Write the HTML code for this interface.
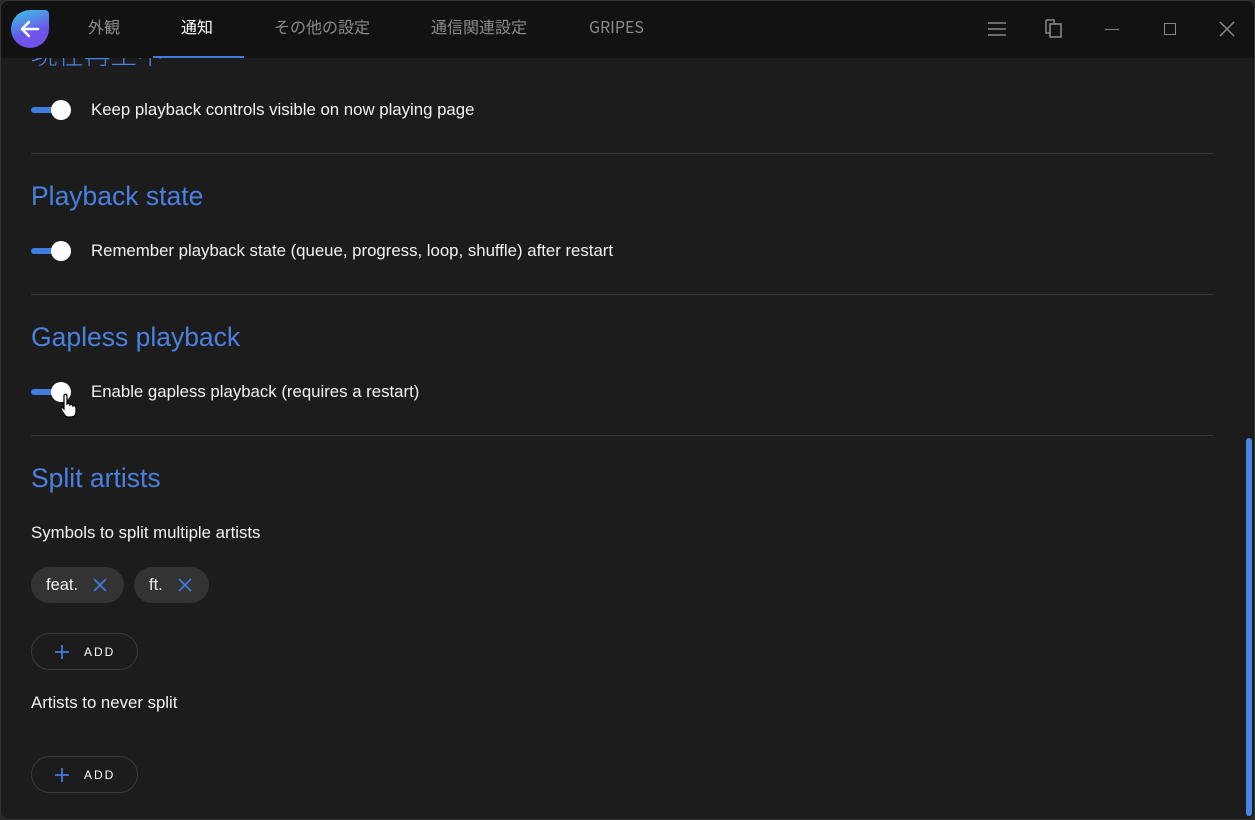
<!DOCTYPE html>
<html><head><meta charset="utf-8"><style>
*{margin:0;padding:0;box-sizing:border-box}
body{width:1255px;height:820px;background:#2a2a2a;overflow:hidden;font-family:"Liberation Sans","Noto Sans CJK JP",sans-serif;position:relative}
.win{position:absolute;left:0;top:0;width:1255px;height:820px;background:#1c1c1c;border-radius:8px;overflow:hidden;border:1px solid #333}
.hdr{position:absolute;left:0;top:0;width:100%;height:57px;background:#121212;z-index:2}
.logo{position:absolute;left:10px;top:9px;width:38px;height:38px;border-radius:19px 4px 19px 19px;background:linear-gradient(160deg,#38c9e8,#6a55e8 60%,#7b4fe6)}
.tab{position:absolute;top:16px;font-size:16px;line-height:18px;color:#8a8a8a;font-family:"Noto Sans CJK JP","Liberation Sans",sans-serif}
.ul{position:absolute;left:152px;top:55px;width:91px;height:2px;background:#3f7de0}
.abs{position:absolute}
h2{position:absolute;left:30px;font-size:26.5px;line-height:32px;font-weight:normal;color:#4a80e0}
.t{position:absolute;left:90px;font-size:16.8px;line-height:20px;color:#f2f2f2}
.tg{position:absolute;left:30px;width:40px;height:20px}
.tg:before{content:"";position:absolute;left:0;top:7px;width:30px;height:6px;border-radius:3px;background:#3f7de0}
.tg:after{content:"";position:absolute;left:20px;top:0;width:20px;height:20px;border-radius:50%;background:#fff}
.hr{position:absolute;left:30px;width:1182px;height:1px;background:#393939}
.chip{position:absolute;top:566px;height:36px;border-radius:18px;background:#333;color:#f0f0f0;font-size:16.5px;line-height:36px;padding-left:15px}
.add{position:absolute;left:30px;width:107px;height:37px;border:1px solid #3a3a3a;border-radius:19px;color:#fff;font-size:12px;letter-spacing:2px}
</style></head><body>
<div class="win">
<div class="hdr">
<div class="logo"><svg width="38" height="38" viewBox="0 0 38 38"><path d="M27 19H12M18 12l-7 7 7 7" stroke="#fff" stroke-width="2.5" fill="none" stroke-linecap="round" stroke-linejoin="round"/></svg></div>
<div class="tab" style="left:87px">外観</div>
<div class="tab" style="left:180px;color:#fff">通知</div>
<div class="tab" style="left:273px">その他の設定</div>
<div class="tab" style="left:430px">通信関連設定</div>
<div class="tab" style="left:588px">GRIPES</div>
<svg class="abs" style="left:985px;top:19px" width="22" height="18"><path d="M2 3h18M2 9h18M2 15h18" stroke="#888" stroke-width="1.5"/></svg>
<svg class="abs" style="left:1043px;top:17px" width="22" height="22"><path d="M2 2h8v3M2 2v13h4" stroke="#888" stroke-width="1.5" fill="none"/><rect x="6" y="6" width="11" height="13" stroke="#888" stroke-width="1.6" fill="none"/></svg>
<div class="abs" style="left:1104px;top:28px;width:14px;height:1px;background:#888"></div>
<div class="abs" style="left:1163px;top:22px;width:12px;height:12px;border:1.5px solid #888"></div>
<svg class="abs" style="left:1218px;top:20px" width="16" height="16"><path d="M1 1l14 14M15 1L1 15" stroke="#888" stroke-width="1.5"/></svg>
<div class="ul"></div>
</div>
<h2 style="top:36px;font-family:'Noto Sans CJK JP',sans-serif;font-weight:300">現在再生中</h2>
<div class="tg" style="top:99px"></div><div class="t" style="top:99px">Keep playback controls visible on now playing page</div>
<div class="hr" style="top:152px"></div>
<h2 style="top:179px">Playback state</h2>
<div class="tg" style="top:240px"></div><div class="t" style="top:240px">Remember playback state (queue, progress, loop, shuffle) after restart</div>
<div class="hr" style="top:293px"></div>
<h2 style="top:320px">Gapless playback</h2>
<div class="tg" style="top:381px"></div><div class="t" style="top:381px">Enable gapless playback (requires a restart)</div>
<svg class="abs" style="left:58px;top:392px" width="20" height="26"><path d="M5 2c1-1 3-1 3 1v8c1-1 3 0 3 1 1-1 3 0 3 1 1-1 3 0 3 2v4c0 3-2 5-5 5h-3c-2 0-3-1-4-3l-3-5c0-1 1-2 2-1l1 1V3z" fill="#fff" stroke="#000" stroke-width="1.2"/></svg>
<div class="hr" style="top:434px"></div>
<h2 style="top:461px">Split artists</h2>
<div class="t" style="left:30px;top:522px">Symbols to split multiple artists</div>
<div class="chip" style="left:30px;width:93px">feat.<svg class="abs" style="left:62px;top:11px" width="14" height="14"><path d="M1 1l12 12M13 1L1 13" stroke="#3f7de0" stroke-width="1.6"/></svg></div>
<div class="chip" style="left:133px;width:75px">ft.<svg class="abs" style="left:44px;top:11px" width="14" height="14"><path d="M1 1l12 12M13 1L1 13" stroke="#3f7de0" stroke-width="1.6"/></svg></div>
<div class="add" style="top:632px"><svg class="abs" style="left:22px;top:10px" width="16" height="16"><path d="M8 1v14M1 8h14" stroke="#3f7de0" stroke-width="1.8"/></svg><span class="abs" style="left:52px;top:11px">ADD</span></div>
<div class="t" style="left:30px;top:692px">Artists to never split</div>
<div class="add" style="top:755px"><svg class="abs" style="left:22px;top:10px" width="16" height="16"><path d="M8 1v14M1 8h14" stroke="#3f7de0" stroke-width="1.8"/></svg><span class="abs" style="left:52px;top:11px">ADD</span></div>
<div class="abs" style="left:1245px;top:437px;width:6px;height:378px;border-radius:3px;background:#4a84e4"></div>
</div>
</body></html>
